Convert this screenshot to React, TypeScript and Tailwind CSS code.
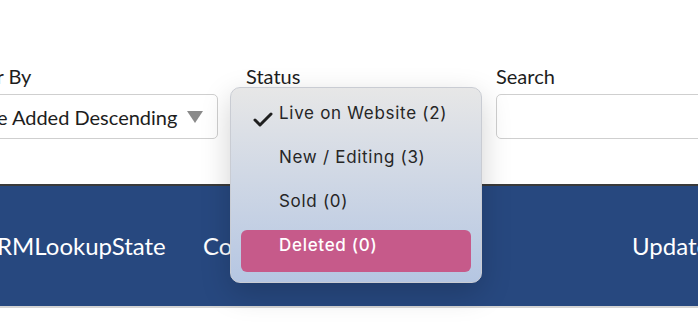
import { Check } from 'lucide-react';

const labelFont = { fontFamily: 'Lato, "Open Sans", sans-serif' };

const StatusMenu = () => {
  const items = [
    { label: 'Live on Website (2)', checked: true },
    { label: 'New / Editing (3)' },
    { label: 'Sold (0)' },
    { label: 'Deleted (0)', active: true },
  ];

  return (
    <div
      className="absolute left-[230px] top-[87px] w-[252px] h-[196px] rounded-[10px] border border-[#c9ccd3] bg-gradient-to-b from-[#e7e7e7] to-[#b5c6e2] px-[10px] pt-[6px] shadow-[0_10px_30px_rgba(0,0,0,0.18)]"
      style={{ fontFamily: 'Inter, "Noto Sans", sans-serif' }}
    >
      {items.map((item) => (
        <div
          key={item.label}
          className={
            'relative flex items-center rounded-[6px] pl-[38px] text-[17px] tracking-[0.7px] ' +
            (item.active ? 'mt-[4px] h-[42px] bg-[#c65a8a] font-medium text-white' : 'h-[44px] text-[#262626]')
          }
        >
          {item.checked && (
            <Check className="absolute left-[10px] top-[14px] h-[24px] w-[24px] text-[#1f1f1f]" strokeWidth={3} />
          )}
          <span className={item.active ? '-mt-[10px]' : '-mt-[4px]'}>{item.label}</span>
        </div>
      ))}
    </div>
  );
};

const App = () => {
  return (
    <div className="relative h-[330px] w-[698px] overflow-hidden bg-white" style={labelFont}>
      <div className="flex pt-[63px] ml-[-48px] gap-[28px]">
        <div className="w-[266px] shrink-0">
          <div className="text-[20px] text-[#1d1d1d] leading-[26px]">Order By</div>
          <div className="mt-[5px] flex h-[45px] items-center justify-between rounded-[5px] border border-[#cfcfcf] bg-white pl-[12px] pr-[14px]">
            <span className="text-[20px] text-[#1d1d1d]">Date Added Descending</span>
            <svg width="16" height="12" viewBox="0 0 16 12">
              <path d="M0 0 H16 L8 12 Z" fill="#8a8a8a" />
            </svg>
          </div>
        </div>
        <div className="w-[222px] shrink-0">
          <div className="text-[20px] text-[#1d1d1d] leading-[26px]">Status</div>
          <div className="mt-[5px] h-[45px] rounded-[5px] border border-[#cfcfcf] bg-white" />
        </div>
        <div className="w-[260px] shrink-0">
          <div className="text-[20px] text-[#1d1d1d] leading-[26px]">Search</div>
          <div className="mt-[5px] h-[45px] rounded-[5px] border border-[#cfcfcf] bg-white" />
        </div>
      </div>

      <div className="mt-[45px] flex h-[124px] items-center border-t-2 border-t-[#3a3a3a] border-b-2 border-b-[#d4d4d4] bg-[#27487f] text-[24px] text-white">
        <span className="ml-[-19px] w-[222px] shrink-0">CRMLookupState</span>
        <span className="w-[429px] shrink-0">Contact</span>
        <span className="shrink-0">Updated</span>
      </div>

      <StatusMenu />
    </div>
  );
};

export default App;
